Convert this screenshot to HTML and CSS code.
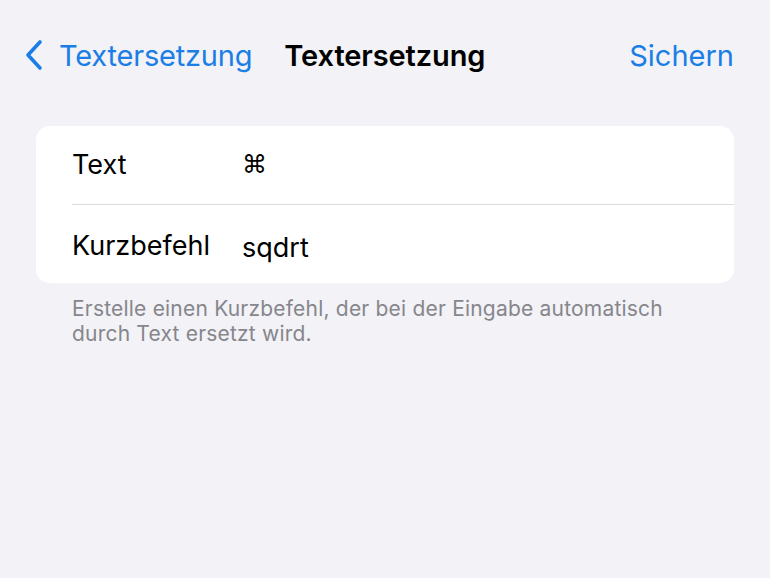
FILE: index.html
```html
<!DOCTYPE html>
<html lang="de">
<head>
    <meta charset="UTF-8">
    <meta name="viewport" content="width=device-width, initial-scale=1.0">
    <title>Textersetzung</title>
    <link rel="stylesheet" href="styles.css">
</head>
<body>
    <header class="nav">
        <a class="nav-back" href="#">
            <svg class="chevron" width="20" height="32" viewBox="0 0 20 32" fill="none" stroke="currentColor" stroke-width="3.6" stroke-linecap="round" stroke-linejoin="round">
                <polyline points="16 3 4 16 16 29"></polyline>
            </svg>
            <span>Textersetzung</span>
        </a>
        <h1 class="nav-title">Textersetzung</h1>
        <a class="nav-action" href="#">Sichern</a>
    </header>

    <section class="group">
        <div class="row">
            <span class="row-label">Text</span>
            <span class="row-value cmd">⌘</span>
        </div>
        <div class="row">
            <span class="row-label">Kurzbefehl</span>
            <span class="row-value">sqdrt</span>
        </div>
    </section>
    <p class="footnote">Erstelle einen Kurzbefehl, der bei der Eingabe automatisch durch Text ersetzt wird.</p>
</body>
</html>
```

FILE: styles.css
```css
body {
    margin: 0;
    background-color: #f2f2f7;
    color: #000;
    font-family: 'Inter', 'Roboto', sans-serif;
}

a {
    text-decoration: none;
}

/* Navigation bar */
.nav {
    display: flex;
    align-items: center;
    height: 50px;
    padding: 30px 36px 0 24px;
}

.nav-back {
    display: flex;
    align-items: center;
    color: #1a7ee6;
    font-size: 29px;
    letter-spacing: -0.2px;
}

.chevron {
    margin-right: 15px;
}

.nav-title {
    margin: 0 0 0 32px;
    font-size: 29px;
    font-weight: 600;
    letter-spacing: -0.1px;
}

.nav-action {
    margin-left: auto;
    color: #1a7ee6;
    font-size: 29px;
    letter-spacing: 0;
}

/* Grouped list */
.group {
    margin: 46px 36px 0 36px;
    background-color: #fff;
    border-radius: 14px;
    padding-left: 36px;
}

.row {
    display: flex;
    align-items: center;
    height: 78px;
    font-size: 27px;
    letter-spacing: 0;
}

.row + .row {
    border-top: 1px solid #dcdce0;
}

.row:first-child {
    align-items: flex-start;
    padding-top: 22px;
    height: 56px;
}

.row:last-child {
    padding-top: 3px;
    height: 75px;
}

.row-label {
    width: 170px;
}

.row-value {
    margin-top: 3px;
}

.cmd {
    font-family: 'DejaVu Sans', sans-serif;
    font-size: 25px;
    margin-top: 2px;
}

/* Footer hint */
.footnote {
    max-width: 620px;
    margin: 13px 36px 0 72px;
    color: #86868b;
    font-size: 21px;
    line-height: 25px;
    letter-spacing: 0.2px;
}
```
